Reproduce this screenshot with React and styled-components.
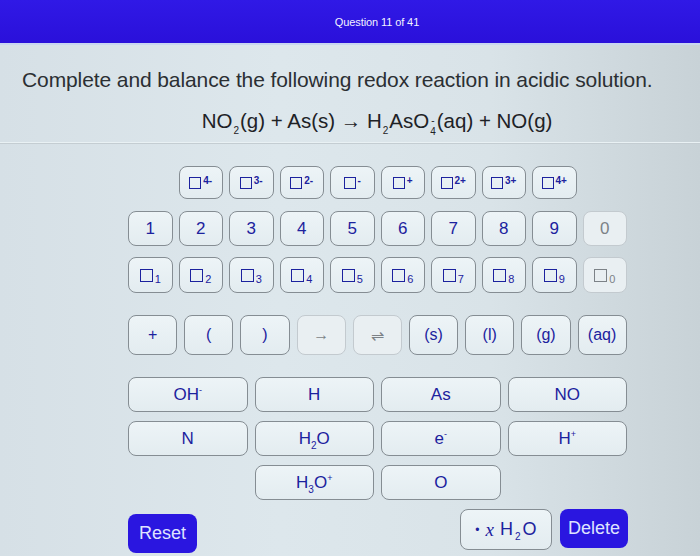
import React from "react";
import styled, { createGlobalStyle, css } from "styled-components";

const GlobalStyle = createGlobalStyle`
  html, body {
    margin: 0;
    padding: 0;
  }
  body {
    width: 700px;
    height: 556px;
    overflow: hidden;
    font-family: "Liberation Sans", Arial, sans-serif;
  }
`;

const INK = "#1c229e";
const BLUE = "#2a16e0";

const Page = styled.div`
  width: 700px;
  height: 556px;
  display: flex;
  flex-direction: column;
  background: linear-gradient(90deg, #d6e0e6 0%, #dde7ec 40%, #d9e3e8 70%, #c8d2d7 100%);
`;

const Header = styled.header`
  height: 43px;
  flex-shrink: 0;
  display: flex;
  align-items: center;
  justify-content: center;
  padding-left: 54px;
  background: linear-gradient(180deg, #3019e6 0%, #2a10da 100%);
  border-bottom: 2px solid #c9d6f0;
`;

const HeaderTitle = styled.span`
  color: #f2f2ff;
  font-size: 11px;
  letter-spacing: -0.1px;
`;

const Prompt = styled.p`
  margin: 22px 0 0 22px;
  font-size: 21px;
  line-height: 25px;
  color: #2b2f33;
  letter-spacing: -0.1px;
`;

const Equation = styled.div`
  margin-top: 15px;
  padding-left: 54px;
  display: flex;
  justify-content: center;
  align-items: baseline;
  font-size: 20.5px;
  line-height: 27px;
  color: #1e2226;
  white-space: pre;
`;

const Sub = styled.span`
  font-size: 10px;
  position: relative;
  top: 6px;
  margin: 0 1px;
`;

const SubSup = styled.span`
  display: inline-flex;
  flex-direction: column;
  align-items: center;
  align-self: center;
  font-size: 10px;
  line-height: 11px;
  margin: 0 1px;
  position: relative;
  top: 3px;
`;

const Divider = styled.div`
  margin-top: 5px;
  height: 1px;
  background: #c4cdd2;
  box-shadow: 0 -1px 0 #e9f1f4;
`;

const Keypad = styled.div`
  margin: 22px 0 0 128px;
  width: 499px;
  display: flex;
  flex-direction: column;
`;

const Row = styled.div`
  display: flex;
  gap: ${(p) => p.$gap || 6}px;
  margin-top: ${(p) => p.$top || 0}px;
  padding-left: ${(p) => p.$indent || 0}px;
`;

const Key = styled.button`
  box-sizing: border-box;
  width: ${(p) => p.$w || 44.5}px;
  height: ${(p) => p.$h || 35}px;
  padding: 0;
  display: flex;
  align-items: center;
  justify-content: center;
  border-radius: 8px;
  border: 1.5px solid #858d93;
  background: linear-gradient(180deg, #edf4f7 0%, #e3ecf0 100%);
  color: ${INK};
  font-family: "Liberation Sans", Arial, sans-serif;
  font-size: ${(p) => p.$fs || 17}px;
  cursor: pointer;
  ${(p) =>
    p.$off &&
    css`
      border-color: #c3cacf;
      background: #e9eff2;
      color: #7c8287;
    `}
`;

const Square = styled.span`
  box-sizing: border-box;
  display: inline-block;
  width: ${(p) => p.$s || 12}px;
  height: ${(p) => p.$s || 12}px;
  border: 1.3px solid currentColor;
`;

const Sup = styled.span`
  align-self: flex-start;
  margin-top: 8px;
  margin-left: 2px;
  font-size: 10px;
  font-weight: bold;
`;

const Low = styled.span`
  align-self: flex-end;
  margin-bottom: 7px;
  margin-left: 2px;
  font-size: 11px;
`;

const Species = styled.div`
  margin-top: 22px;
  display: grid;
  grid-template-columns: repeat(4, 1fr);
  column-gap: 7px;
  row-gap: 9px;
`;

const Wide = styled(Key)`
  width: auto;
  height: 35px;
  grid-column: ${(p) => p.$col || "auto"};
  font-size: 17px;
`;

const Tiny = styled.span`
  font-size: ${(p) => p.$fs || 9}px;
  position: relative;
  top: ${(p) => p.$y || 0}px;
`;

const Footer = styled.div`
  margin: 9px 0 0 128px;
  width: 500px;
  display: flex;
  align-items: flex-start;
  gap: 8px;
`;

const ActionButton = styled.button`
  box-sizing: border-box;
  height: 39px;
  padding: 0 8px;
  border: none;
  border-radius: 8px;
  background: ${BLUE};
  color: #dfe3ff;
  font-family: "Liberation Sans", Arial, sans-serif;
  font-size: 18px;
  cursor: pointer;
  ${(p) =>
    p.$left &&
    css`
      margin-top: 5px;
      margin-right: auto;
      width: 69px;
    `}
`;

const WaterKey = styled(Key)`
  width: 92px;
  height: 41px;
  font-size: 18px;
  gap: 2px;
`;

const Dot = styled.span`
  font-size: 12px;
  margin-right: 4px;
`;

const Italic = styled.span`
  font-family: "Liberation Serif", "Times New Roman", serif;
  font-style: italic;
  font-size: 19px;
  margin-right: 4px;
`;

const charges = ["4-", "3-", "2-", "-", "+", "2+", "3+", "4+"];
const digits = ["1", "2", "3", "4", "5", "6", "7", "8", "9", "0"];
const symbols = [
  { t: "+" },
  { t: "(" },
  { t: ")" },
  { t: "→", off: true },
  { t: "⇌", off: true },
  { t: "(s)" },
  { t: "(l)" },
  { t: "(g)" },
  { t: "(aq)" },
];

export default function App() {
  return (
    <>
      <GlobalStyle />
      <Page>
        <Header>
          <HeaderTitle>Question 11 of 41</HeaderTitle>
        </Header>

        <Prompt>Complete and balance the following redox reaction in acidic solution.</Prompt>

        <Equation>
          NO<Sub>2</Sub>(g) + As(s) → H<Sub>2</Sub>AsO
          <SubSup>
            <span>-</span>
            <span>4</span>
          </SubSup>
          (aq) + NO(g)
        </Equation>

        <Divider />

        <Keypad>
          <Row $indent={50.5}>
            {charges.map((c) => (
              <Key key={c} $h={33}>
                <Square />
                <Sup>{c}</Sup>
              </Key>
            ))}
          </Row>

          <Row $top={12}>
            {digits.map((d) => (
              <Key key={d} $off={d === "0"}>
                {d}
              </Key>
            ))}
          </Row>

          <Row $top={11}>
            {digits.map((d) => (
              <Key key={d} $h={36} $off={d === "0"}>
                <Square $s={13} />
                <Low>{d}</Low>
              </Key>
            ))}
          </Row>

          <Row $top={22} $gap={7}>
            {symbols.map((s) => (
              <Key key={s.t} $w={49.2} $h={40} $fs={16} $off={s.off}>
                {s.t}
              </Key>
            ))}
          </Row>

          <Species>
            <Wide>
              OH<Tiny $y={-5}>-</Tiny>
            </Wide>
            <Wide>H</Wide>
            <Wide>As</Wide>
            <Wide>NO</Wide>
            <Wide>N</Wide>
            <Wide>
              H<Tiny $y={7} $fs={10}>2</Tiny>O
            </Wide>
            <Wide>
              e<Tiny $y={-5}>-</Tiny>
            </Wide>
            <Wide>
              H<Tiny $y={-5}>+</Tiny>
            </Wide>
            <Wide $col="2">
              H<Tiny $y={7} $fs={10}>3</Tiny>O<Tiny $y={-5}>+</Tiny>
            </Wide>
            <Wide $col="3">O</Wide>
          </Species>
        </Keypad>

        <Footer>
          <ActionButton $left>Reset</ActionButton>
          <WaterKey>
            <Dot>•</Dot>
            <Italic>x</Italic>H<Tiny $y={7} $fs={10}>2</Tiny>O
          </WaterKey>
          <ActionButton>Delete</ActionButton>
        </Footer>
      </Page>
    </>
  );
}
